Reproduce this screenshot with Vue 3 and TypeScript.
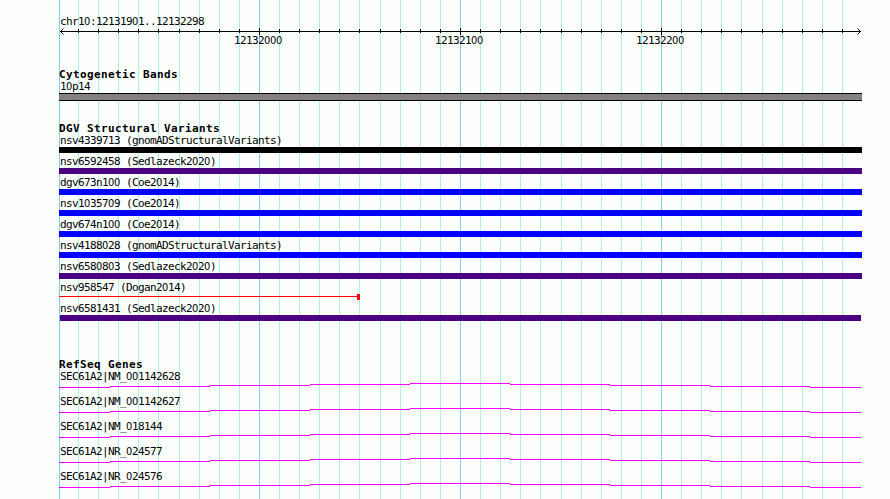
<script setup lang="ts">
import { defineComponent, h } from 'vue'

interface Variant {
  id: string
  source: string
  kind: 'black' | 'indigo' | 'blue' | 'range' | 'indigo inset'
}

/* Fixed-pitch label; zeros are drawn in an undotted face. */
const TrackLabel = defineComponent({
  props: { text: { type: String, required: true } },
  setup(props) {
    return () =>
      h(
        'span',
        { class: 'track-label' },
        props.text.split(/(0+)/).filter(Boolean).map((part) =>
          part[0] === '0' ? h('span', { class: 'zero' }, part) : part,
        ),
      )
  },
})

const minor: number[] = [
  78, 98, 118, 138, 158, 179, 199, 219, 239, 279, 299, 319, 339, 359, 380, 400, 420, 440,
  480, 500, 520, 540, 561, 581, 601, 621, 641, 681, 701, 721, 741, 762, 782, 802, 822, 842,
]
const major: number[] = [259, 460, 661]
const scale: string[] = ['12132000', '12132100', '12132200']

const variants: Variant[] = [
  { id: 'nsv4339713', source: 'gnomADStructuralVariants', kind: 'black' },
  { id: 'nsv6592458', source: 'Sedlazeck2020', kind: 'indigo' },
  { id: 'dgv673n100', source: 'Coe2014', kind: 'blue' },
  { id: 'nsv1035709', source: 'Coe2014', kind: 'blue' },
  { id: 'dgv674n100', source: 'Coe2014', kind: 'blue' },
  { id: 'nsv4188028', source: 'gnomADStructuralVariants', kind: 'blue' },
  { id: 'nsv6580803', source: 'Sedlazeck2020', kind: 'indigo' },
  { id: 'nsv958547', source: 'Dogan2014', kind: 'range' },
  { id: 'nsv6581431', source: 'Sedlazeck2020', kind: 'indigo inset' },
]

const genes: string[] = [
  'SEC61A2|NM_001142628',
  'SEC61A2|NM_001142627',
  'SEC61A2|NM_018144',
  'SEC61A2|NR_024577',
  'SEC61A2|NR_024576',
]

const intron =
  'M0 4.5H51M51 3.5H151M151 2.5H251M251 1.5H351M351 .5H451M451 1.5H551M551 2.5H651M651 3.5H751M751 4.5H802'
</script>

<template>
  <main class="browser">
    <svg class="grid" width="890" height="499" shape-rendering="crispEdges" aria-hidden="true">
      <rect class="major" x="59" y="0" width="1" height="499" />
      <rect v-for="x in minor" :key="x" class="minor" :x="x" y="0" width="1" height="499" />
      <rect v-for="x in major" :key="x" class="major" :x="x" y="0" width="1" height="499" />
    </svg>

    <section class="overview">
      <TrackLabel text="chr10:12131901..12132298" />
      <svg class="ruler" width="803" height="7" viewBox="59 28 803 7">
        <g shape-rendering="crispEdges">
          <rect x="60" y="31" width="801" height="1" />
          <rect v-for="x in minor" :key="x" :x="x" y="29" width="1" height="4" />
          <rect v-for="x in major" :key="x" :x="x" y="28" width="1" height="7" />
        </g>
        <path d="M63.5 28.5L60.5 31.5L63.5 34.5M857.5 28.5L860.5 31.5L857.5 34.5" />
      </svg>
      <div class="scale">
        <TrackLabel v-for="s in scale" :key="s" :text="s" />
      </div>
    </section>

    <section class="cytobands">
      <h2>Cytogenetic Bands</h2>
      <TrackLabel text="10p14" />
      <div class="band"></div>
    </section>

    <section class="variants">
      <h2>DGV Structural Variants</h2>
      <div v-for="v in variants" :key="v.id" class="variant">
        <TrackLabel :text="`${v.id} (${v.source})`" />
        <div class="bar" :class="v.kind"></div>
      </div>
    </section>

    <section class="genes">
      <h2>RefSeq Genes</h2>
      <div v-for="g in genes" :key="g" class="gene">
        <TrackLabel :text="g" />
        <svg width="802" height="5" shape-rendering="crispEdges"><path :d="intron" /></svg>
      </div>
    </section>
  </main>
</template>

<style>
body {
  background: #fdfffc;
  overflow: hidden;
}
</style>

<style scoped>
.browser {
  position: relative;
  box-sizing: border-box;
  width: 890px;
  height: 499px;
  padding: 16px 28px 0 59px;
  overflow: hidden;
  background: #fdfffc;
  color: #000;
}
.grid {
  position: absolute;
  top: 0;
  left: 0;
}
.minor {
  fill: #afeeee;
}
.major {
  fill: #87ceeb;
}
section {
  position: relative;
}
:deep(.track-label) {
  display: block;
  height: 12px;
  padding-left: 1px;
  font: 11px/12px 'DejaVu Sans Mono', monospace;
  letter-spacing: -0.622px;
  white-space: pre;
}
:deep(.zero) {
  font-family: 'DejaVu Sans Condensed', 'DejaVu Sans', sans-serif;
  font-stretch: condensed;
  letter-spacing: -0.3px;
}
h2 {
  height: 12px;
  margin: 0;
  font: bold 11px/12px 'DejaVu Sans Mono', monospace;
  letter-spacing: 0.378px;
  white-space: pre;
}
.ruler {
  display: block;
}
.ruler path {
  fill: none;
  stroke: #000;
}
.scale {
  display: flex;
  gap: 152px;
  padding-left: 174px;
}
.scale :deep(.track-label) {
  box-sizing: border-box;
  width: 49px;
}
.cytobands {
  margin-top: 22px;
}
.band {
  box-sizing: border-box;
  height: 8px;
  border: solid #000;
  border-width: 1px 0;
  background: #848084;
}
.variants {
  margin-top: 22px;
}
.variant {
  height: 21px;
}
.bar {
  height: 6px;
}
.black {
  background: #000;
}
.indigo {
  background: #4b0082;
}
.inset {
  margin-right: 1px;
  margin-left: 1px;
}
.blue {
  background: #00f;
}
.range {
  display: flex;
  align-items: flex-start;
  width: 301px;
}
.range::before {
  content: '';
  flex: 1;
  height: 1px;
  margin-top: 2px;
  background: #f00;
}
.range::after {
  content: '';
  width: 3px;
  height: 6px;
  background: #f00;
}
.genes {
  margin-top: 35px;
}
.gene {
  height: 25px;
}
.gene svg {
  display: block;
}
.gene path {
  fill: none;
  stroke: #f0f;
}
</style>
